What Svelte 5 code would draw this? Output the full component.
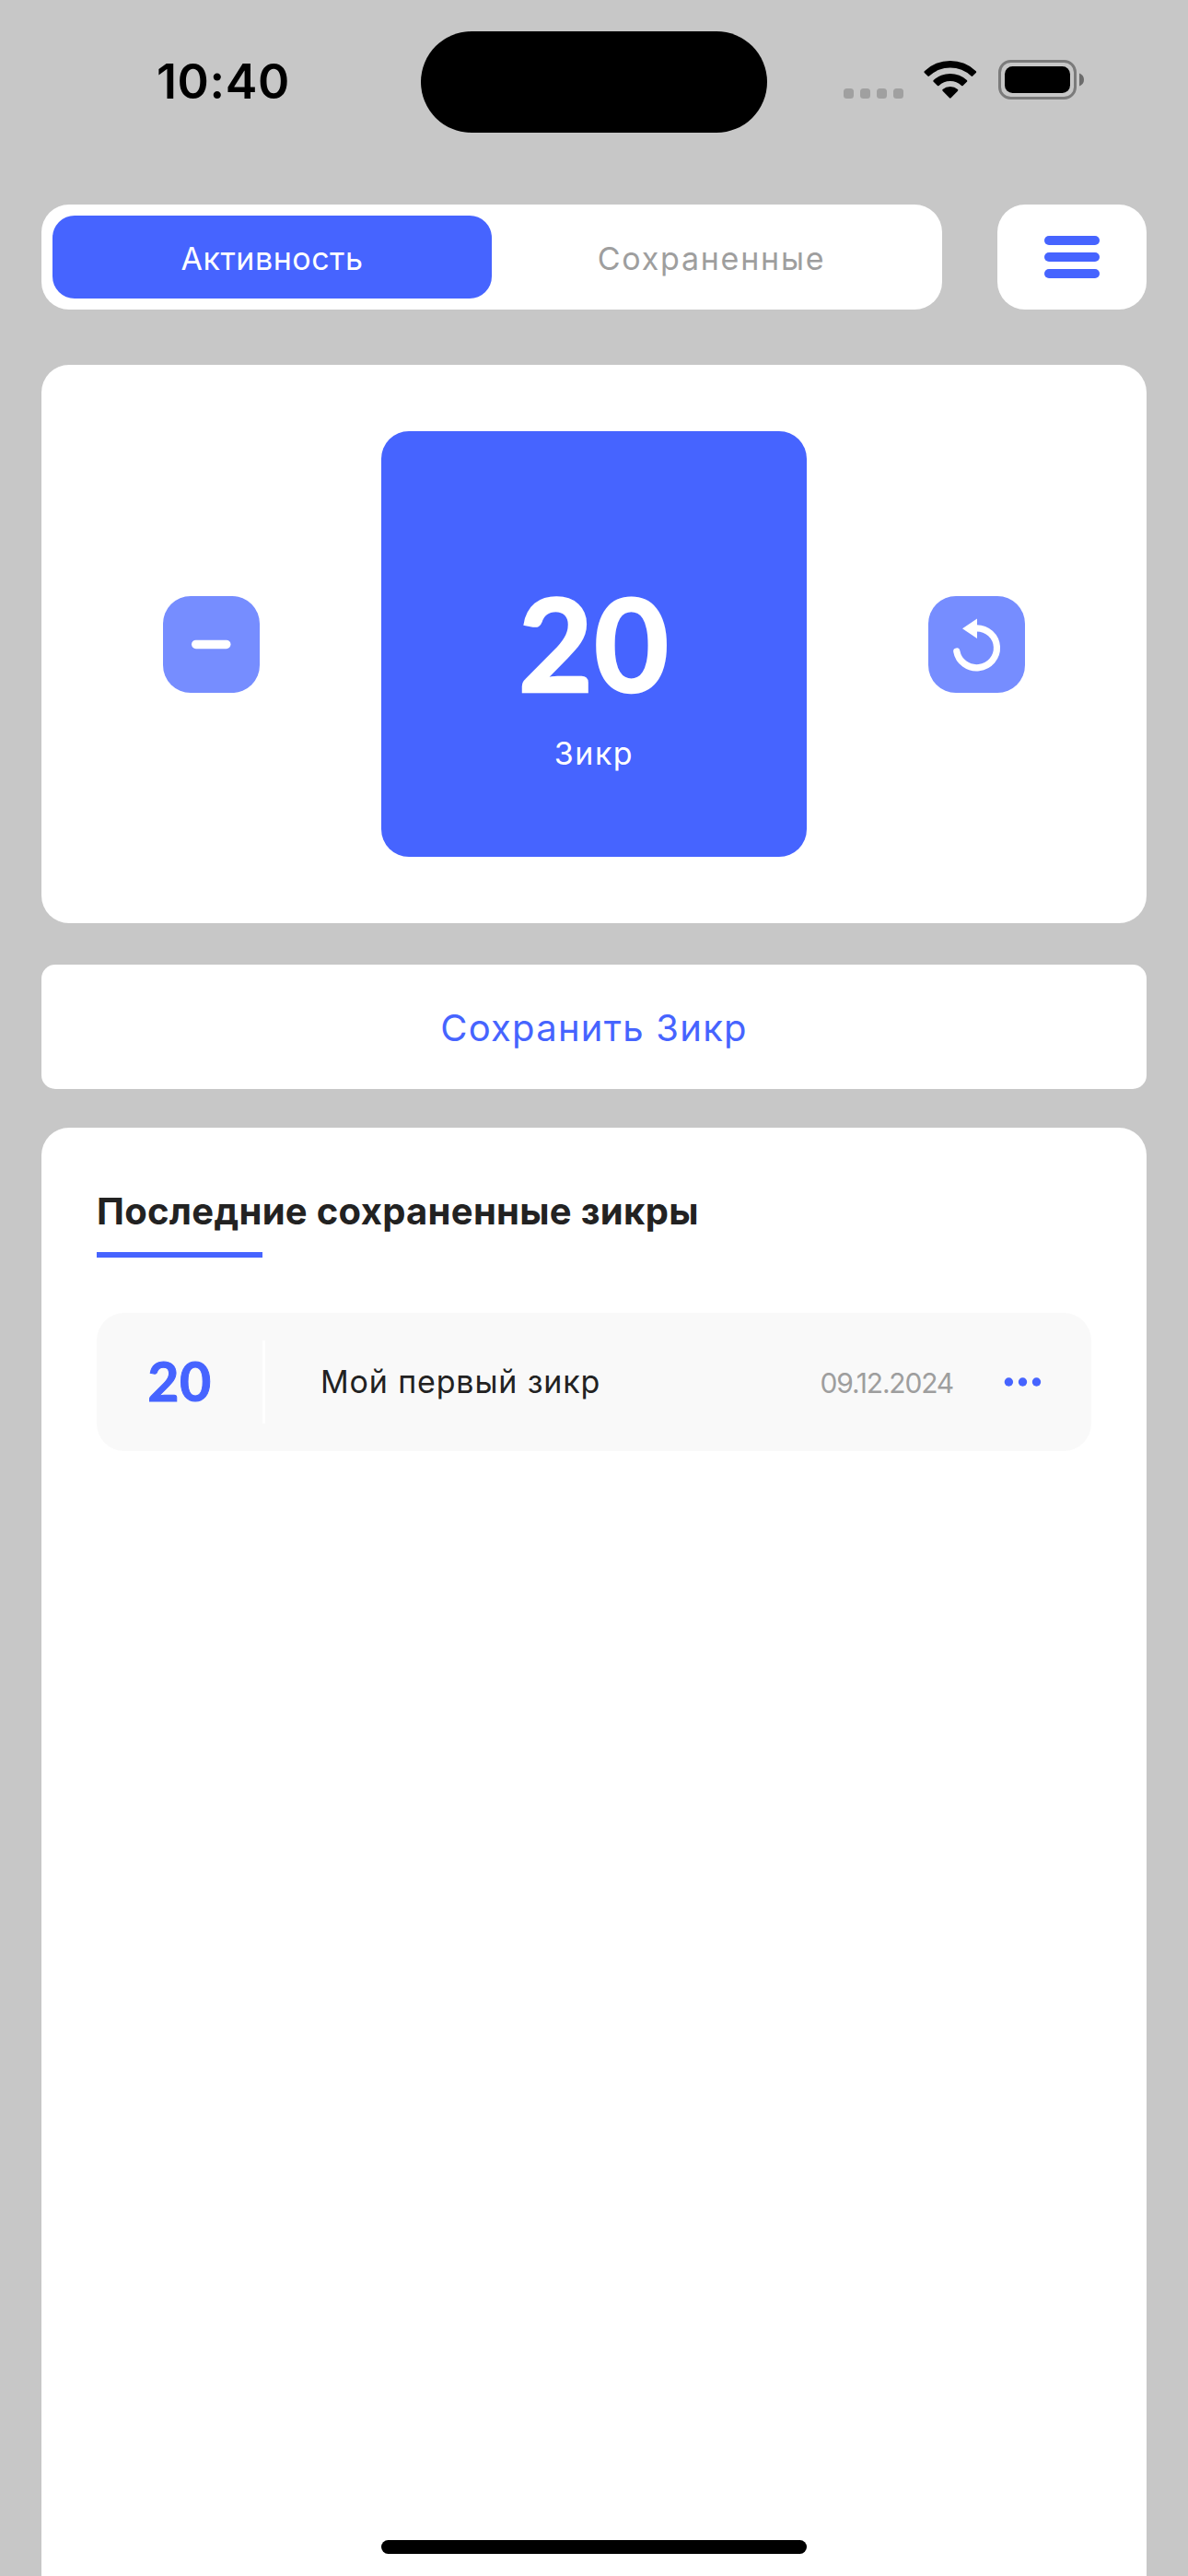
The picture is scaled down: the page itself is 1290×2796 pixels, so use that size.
<script>
  const records = [{ count: 20, name: 'Мой первый зикр', date: '09.12.2024' }];
</script>

<div class="screen">
  <header class="status">
    <div class="clock">10:40</div>
    <div class="island"></div>
    <div class="indicators">
      <svg class="signal" width="65" height="11" viewBox="0 0 65 11" fill="#a0a0a0">
        <rect width="11" height="11" rx="3.5" /><rect x="18" width="11" height="11" rx="3.5" />
        <rect x="36" width="11" height="11" rx="3.5" /><rect x="54" width="11" height="11" rx="3.5" />
      </svg>
      <svg class="wifi" width="58" height="43" viewBox="0 0 58 43">
        <path d="M.8 12.2 Q0 13 .8 13.9 L4.4 17.6 Q5.2 18.4 6 17.6 A33 33 0 0 1 51.6 17.6 Q52.4 18.4 53.2 17.6 L56.8 13.9 Q57.6 13 56.8 12.2 A40.4 40.4 0 0 0 .8 12.2 Z" />
        <path d="M10.7 22.1 Q9.9 23 10.7 23.8 L15 28 Q15.7 28.6 16.5 27.9 A18.2 18.2 0 0 1 41.1 27.9 Q41.9 28.6 42.6 28 L46.9 23.8 Q47.7 23 46.9 22.1 A26.5 26.5 0 0 0 10.7 22.1 Z" />
        <path d="M20.6 32 Q19.8 32.9 20.6 33.7 L28 41.3 Q28.8 42.1 29.6 41.3 L37 33.7 Q37.8 32.9 37 32 A12.4 12.4 0 0 0 20.6 32 Z" />
      </svg>
      <svg class="battery" width="94" height="43" viewBox="0 0 94 43">
        <rect x="1.5" y="1.5" width="82" height="40" rx="12" fill="none" stroke="#7b7b7b" stroke-width="3" />
        <rect x="7" y="7" width="71" height="29" rx="8.5" />
        <path d="M88 14.5 Q93 16.5 93 21.5 Q93 26.5 88 28.5 Z" fill="#6c6c6c" />
      </svg>
    </div>
  </header>

  <nav class="top">
    <div class="tabs">
      <button class="tab active">Активность</button>
      <button class="tab saved">Сохраненные</button>
    </div>
    <button class="menu" aria-label="Меню"><i></i><i></i><i></i></button>
  </nav>

  <section class="counter">
    <button class="round" aria-label="Минус">
      <svg width="105" height="105" viewBox="0 0 105 105"><rect x="31" y="47.7" width="42.5" height="9.5" rx="4.75" fill="#fff" /></svg>
    </button>
    <div class="tile">
      <div class="value">20</div>
      <div class="label">Зикр</div>
    </div>
    <button class="round" aria-label="Сбросить">
      <svg width="105" height="105" viewBox="0 0 105 105">
        <path d="M30.8 60 A22 21.5 0 1 0 52.5 34.8" fill="none" stroke="#fff" stroke-width="7.2" stroke-linecap="round" />
        <path d="M37 35.3 L53 24.5 V46 Z" fill="#fff" />
      </svg>
    </button>
  </section>

  <button class="save">Сохранить Зикр</button>

  <section class="list">
    <h2>Последние сохраненные зикры</h2>
    <div class="underline"></div>
    {#each records as r}
      <article class="row">
        <div class="count">{r.count}</div>
        <div class="divider"></div>
        <div class="name">{r.name}</div>
        <div class="date">{r.date}</div>
        <svg class="dots" width="41" height="12" viewBox="0 0 41 12"><circle cx="5.4" cy="6" r="4.7" /><circle cx="20.5" cy="6" r="4.7" /><circle cx="35.5" cy="6" r="4.7" /></svg>
      </article>
    {/each}
  </section>
  <div class="home"></div>
</div>

<style>
  :global(body) { background: #c7c7c7; }
  .screen {
    width: 1290px; height: 2796px; box-sizing: border-box; padding: 0 45px;
    display: flex; flex-direction: column; overflow: hidden; position: relative;
    background: #c7c7c7; color: #222; font-family: Inter, 'Noto Sans', sans-serif;
  }
  button { border: 0; padding: 0; margin: 0; font: inherit; color: inherit; background: #fff; }
  svg { display: block; }
  .status { height: 222px; display: grid; grid-template-columns: 412px 376px 1fr; align-items: start; flex: none; }
  .clock {
    padding: 57px 0 0 125px; font-size: 52px; line-height: 63px; font-weight: 600;
    letter-spacing: .6px; color: #000;
  }
  .island { height: 110px; margin-top: 34px; border-radius: 55px; background: #000; }
  .indicators { display: flex; align-items: flex-start; padding: 65px 0 0 83px; }
  .signal { margin: 31px 22px 0 0; }
  .wifi { margin-right: 23px; }
  .top { display: flex; justify-content: space-between; height: 114px; flex: none; }
  .tabs { width: 978px; box-sizing: border-box; padding: 12px; border-radius: 30px; background: #fff; display: flex; }
  .tab {
    flex: 1; display: flex; align-items: center; justify-content: center; padding-top: 3px;
    border-radius: 24px; font-size: 34px; color: #9e9e9e;
  }
  .active { background: #4664ff; color: #fff; letter-spacing: .5px; }
  .saved { letter-spacing: 1.75px; }
  .menu {
    width: 162px; border-radius: 30px; display: flex; flex-direction: column;
    align-items: center; justify-content: center; gap: 8px;
  }
  .menu i { width: 60px; height: 10px; border-radius: 5px; background: #4664ff; }
  .counter {
    margin-top: 60px; height: 606px; flex: none; box-sizing: border-box; padding: 0 132px;
    border-radius: 30px; background: #fff; display: flex; align-items: center; justify-content: space-between;
  }
  .round { width: 105px; height: 105px; border-radius: 30px; background: #768dff; }
  .tile {
    width: 462px; height: 462px; box-sizing: border-box; padding-top: 158px;
    border-radius: 30px; background: #4664ff; color: #fff; text-align: center;
  }
  .value {
    font-family: Lato, sans-serif; font-weight: 700; font-size: 140px; line-height: 142px;
    letter-spacing: 1px; -webkit-text-stroke: 2.5px #fff;
  }
  .label { margin-top: 30px; font-size: 34px; line-height: 40px; letter-spacing: 1.5px; }
  .save {
    margin-top: 45px; height: 135px; flex: none; border-radius: 15px; display: flex;
    align-items: center; justify-content: center; padding-top: 2px;
    font-size: 40px; letter-spacing: 1.25px; color: #4664ff;
  }
  .list { margin-top: 42px; flex: 1; padding: 66px 60px 0; border-radius: 30px 30px 0 0; background: #fff; }
  h2 { margin: 0; font-size: 40px; line-height: 49px; font-weight: 700; letter-spacing: .3px; }
  .underline { margin-top: 20px; width: 180px; height: 6px; background: #4664ff; }
  .row {
    margin-top: 60px; height: 150px; box-sizing: border-box; padding-right: 54px;
    border-radius: 30px; background: #f9f9f9; display: flex; align-items: center;
  }
  .count {
    width: 180px; padding-bottom: 4px; text-align: center; color: #4664ff;
    font-family: Lato, sans-serif; font-weight: 700; font-size: 59px; letter-spacing: .5px;
    -webkit-text-stroke: 1px #4664ff;
  }
  .divider { width: 3px; height: 90px; background: #fff; }
  .name { flex: 1; padding: 0 0 1px 60px; font-size: 34px; letter-spacing: .85px; }
  .date { padding-top: 2px; font-size: 30px; letter-spacing: -1.2px; color: #9e9e9e; }
  .dots { margin-left: 55px; fill: #4664ff; }
  .home { position: absolute; left: 414px; bottom: 24px; width: 462px; height: 15px; border-radius: 8px; background: #000; }
</style>
